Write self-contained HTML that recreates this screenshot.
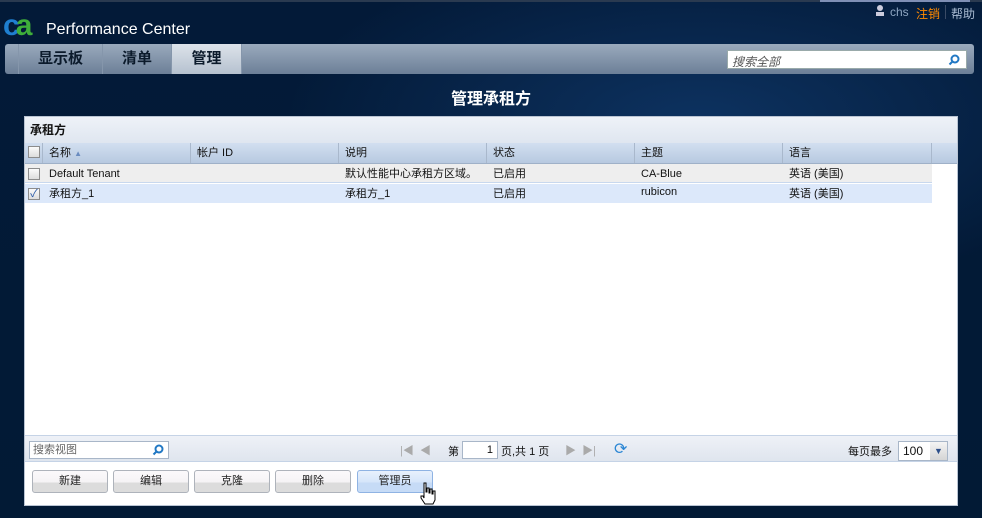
<!DOCTYPE html>
<html><head><meta charset="utf-8"><style>
*{margin:0;padding:0;box-sizing:border-box}
body{width:982px;height:518px;overflow:hidden;background:#021a35;font-family:"Liberation Sans","Noto Sans CJK SC",sans-serif;font-size:11px;color:#111;position:relative}
.bg{position:absolute;inset:0;background:radial-gradient(ellipse 600px 250px at 700px 120px,#0d3260 0%,rgba(2,26,53,0) 70%),linear-gradient(#031a38,#021a35)}
.abs{position:absolute}
.nav{left:5px;top:44px;width:969px;height:30px;border-radius:3px;background:linear-gradient(#9aaabd,#6c7f97);}
.tab{top:0;height:30px;font-size:15px;font-weight:bold;color:#0b1a2b;text-align:center;line-height:30px;border-left:1px solid #8596ab}
.panel{left:24px;top:116px;width:934px;height:390px;background:#fff;border:1px solid #b9c4d3}
.th{top:26px;height:21px;background:linear-gradient(#d2dff0,#b7c9e0);border-bottom:1px solid #9fb1c8}
.cell{position:absolute;height:100%;padding-left:6px;line-height:20px;border-right:1px solid #a9b8cc}
.row{position:absolute;left:0;width:907px;height:19px;line-height:21px}
.cb{position:absolute;left:3px;top:4px;width:12px;height:12px;border:1px solid #8c8c8c;background:linear-gradient(#fafafa,#ddd)}
.btn{position:absolute;top:353px;width:76px;height:23px;border:1px solid #aeb3bb;border-radius:3px;background:linear-gradient(#fbf9fb 0,#f5f3f5 55%,#dcdcdc 56%,#dcdcdc);text-align:center;line-height:21px;font-size:11px;color:#222}
</style></head><body>
<div class="abs bg"></div>
<div class="abs" style="left:0;top:0;width:982px;height:2px;background:#2a3a50"></div>
<div class="abs" style="left:820px;top:0;width:150px;height:2px;background:#7f8fb5"></div>
<div class="abs" style="left:3px;top:11px;font:bold 30px 'Liberation Sans',sans-serif;letter-spacing:-4px;line-height:30px"><span style="color:#1f7fd0">c</span><span style="color:#3fae3a">a</span></div>
<div class="abs" style="left:46px;top:21px;color:#fff;font-size:16px">Performance Center</div>
<div class="abs" style="left:876px;top:5px;width:8px;height:11px;"><div style="width:6px;height:6px;border-radius:3px;background:#ccd;margin-left:1px"></div><div style="width:8px;height:4px;background:#ccd;margin-top:1px"></div></div>
<div class="abs" style="left:890px;top:5px;color:#8fa6c2;font-size:12px">chs</div>
<div class="abs" style="left:916px;top:5px;color:#ff8a00;font-size:12px">注销</div>
<div class="abs" style="left:945px;top:5px;width:1px;height:14px;background:#3a4b66"></div>
<div class="abs" style="left:951px;top:5px;color:#a9bbd2;font-size:12px">帮助</div>
<div class="abs nav">
 <div class="abs tab" style="left:13px;width:84px">显示板</div>
 <div class="abs tab" style="left:97px;width:69px">清单</div>
 <div class="abs tab" style="left:166px;width:70px;background:linear-gradient(#dde3ea,#b5c1cf)">管理</div>
 <div class="abs tab" style="left:236px;width:1px;padding:0"></div>
 <div class="abs" style="left:722px;top:6px;width:240px;height:19px;background:#fff;border:1px solid #9aa"><span style="position:absolute;left:4px;top:2px;font-style:italic;color:#555;font-size:12px">搜索全部</span><svg style="position:absolute;right:6px;top:3px" width="12" height="12" viewBox="0 0 12 12"><circle cx="7" cy="5" r="3.5" fill="none" stroke="#2178c4" stroke-width="2"/><path d="M4.5 7.5L1.5 10.5" stroke="#2178c4" stroke-width="2"/></svg></div>
</div>
<div class="abs" style="left:0;width:982px;top:85px;text-align:center;color:#fff;font-size:16px;font-weight:bold">管理承租方</div>
<div class="abs panel">
 <div class="abs" style="left:0;top:0;width:932px;height:26px;background:linear-gradient(#eef2f8,#dfe6f0);font-weight:bold;font-size:12px;line-height:26px;padding-left:5px">承租方</div>
 <div class="abs th" style="left:0;width:932px">
  <div class="cell" style="left:0;width:18px"><div class="cb" style="top:3px"></div></div>
  <div class="cell" style="left:18px;width:148px">名称 <span style="color:#6a8cc0;font-size:8px">▲</span></div>
  <div class="cell" style="left:166px;width:148px">帐户 ID</div>
  <div class="cell" style="left:314px;width:148px">说明</div>
  <div class="cell" style="left:462px;width:148px">状态</div>
  <div class="cell" style="left:610px;width:148px">主题</div>
  <div class="cell" style="left:758px;width:149px">语言</div>
 </div>
 <div class="row" style="top:47px;background:#eeeeee;border-bottom:1px solid #c8d8ee">
  <div class="cb"></div><span class="abs" style="left:24px">Default Tenant</span><span class="abs" style="left:320px">默认性能中心承租方区域。</span><span class="abs" style="left:468px">已启用</span><span class="abs" style="left:616px">CA-Blue</span><span class="abs" style="left:764px">英语 (美国)</span>
 </div>
 <div class="row" style="top:67px;background:#dce8fa">
  <div class="cb" style="color:#2a5aa8;font-size:11px;line-height:10px;text-align:center">✓</div><span class="abs" style="left:24px">承租方_1</span><span class="abs" style="left:320px">承租方_1</span><span class="abs" style="left:468px">已启用</span><span class="abs" style="left:616px;top:-2px">rubicon</span><span class="abs" style="left:764px">英语 (美国)</span>
 </div>
 <div class="abs" style="left:0;top:318px;width:932px;height:27px;background:linear-gradient(#eef1f7,#dfe5ee);border-top:1px solid #c5d3e6;border-bottom:1px solid #c5d3e6">
  <div class="abs" style="left:4px;top:5px;width:140px;height:18px;background:#fff;border:1px solid #a8b6c8;color:#666;padding-left:3px;line-height:16px">搜索视图<svg style="position:absolute;right:4px;top:2px" width="12" height="12" viewBox="0 0 12 12"><circle cx="7" cy="5" r="3.5" fill="none" stroke="#2178c4" stroke-width="2"/><path d="M4.5 7.5L1.5 10.5" stroke="#2178c4" stroke-width="2"/></svg></div>
  <span class="abs" style="left:375px;top:6px;color:#aaa">|◀ &nbsp;◀</span>
  <span class="abs" style="left:423px;top:7px">第</span>
  <div class="abs" style="left:437px;top:5px;width:36px;height:18px;background:#fff;border:1px solid #a8b6c8;text-align:right;padding-right:4px;line-height:16px">1</div>
  <span class="abs" style="left:476px;top:7px">页,共 1 页</span>
  <span class="abs" style="left:540px;top:6px;color:#aaa">▶ &nbsp;▶|</span>
  <span class="abs" style="left:589px;top:3px;color:#2a86d4;font-size:16px">⟳</span>
  <span class="abs" style="left:823px;top:7px">每页最多</span>
  <div class="abs" style="left:873px;top:5px;width:50px;height:20px;background:#fff;border:1px solid #a8b6c8;padding-left:4px;line-height:18px;font-size:12px">100<span style="position:absolute;right:0;top:0;width:17px;height:18px;background:linear-gradient(#f4f4f4,#d5d5d5);color:#2d4f8a;font-size:9px;text-align:center">▼</span></div>
 </div>
 <div class="btn" style="left:7px">新建</div>
 <div class="btn" style="left:88px">编辑</div>
 <div class="btn" style="left:169px">克隆</div>
 <div class="btn" style="left:250px">删除</div>
 <div class="btn" style="left:332px;border-color:#8fb3e3;background:linear-gradient(#e8f1fc,#d5e5fa 55%,#c6dbf6 56%)">管理员</div>
 <svg class="abs" style="left:395px;top:365px" width="16" height="24" viewBox="0 0 16 24"><path d="M4 1h2v9h1V6h2v5h1V7h2v5h1V9h2v9l-2 4H5l-4-6v-2h2l1 2z" fill="#fff" stroke="#000" stroke-width="1"/></svg>
</div>
</body></html>
